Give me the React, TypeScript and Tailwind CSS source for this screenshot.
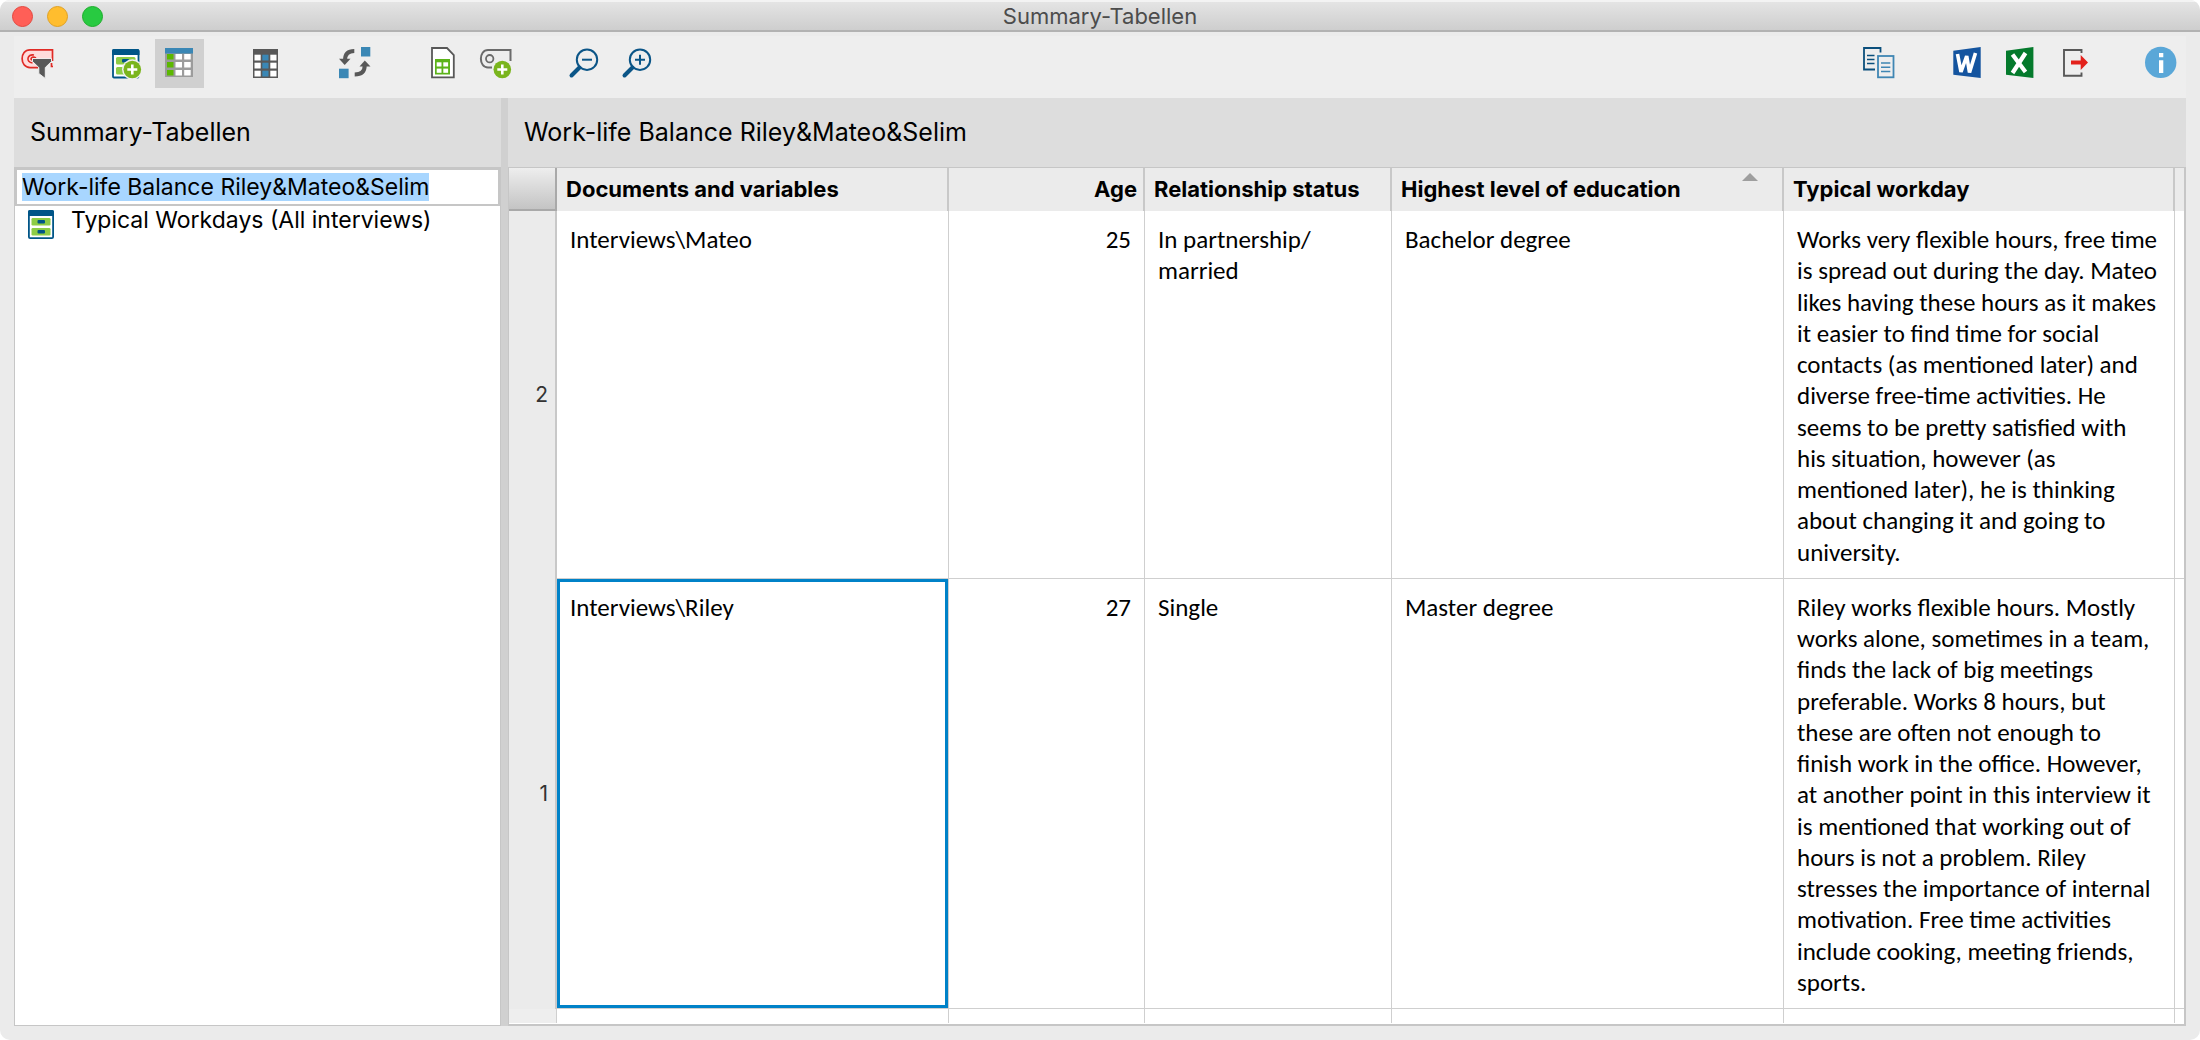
import { useEffect, useRef, type ReactNode } from "react";

const UI = "font-[Inter,sans-serif]";

function ToolButton({ label, active = false, children }: { label: string; active?: boolean; children: ReactNode }) {
  return (
    <button type="button" aria-label={label} aria-pressed={active} className={active ? "size-[49px] bg-[#d0d0d0]" : "size-[49px]"}>
      <svg viewBox="0 0 49 49" className="size-full" fill="none" aria-hidden="true">
        {children}
      </svg>
    </button>
  );
}

function PlusBadge({ cx, cy }: { cx: number; cy: number }) {
  return (
    <g>
      <circle cx={cx} cy={cy} r="10.3" fill="#eeeeee" />
      <circle cx={cx} cy={cy} r="8.8" fill="#7ab51d" />
      <path d={`M${cx - 5} ${cy}h10M${cx} ${cy - 5}v10`} stroke="#fff" strokeWidth="2.6" />
    </g>
  );
}

function Magnifier({ plus }: { plus?: boolean }) {
  return (
    <g stroke="#0b5587">
      <circle cx="27" cy="20.7" r="10.2" strokeWidth="2" />
      <path d="M19.5 28.5L11.5 36.5" strokeWidth="4" strokeLinecap="round" />
      <path d={plus ? "M22 20.7h10M27 15.7v10" : "M22 20.7h10"} strokeWidth="2" />
    </g>
  );
}

function GridCells({ xs, ys, w, h, fills }: { xs: number[]; ys: number[]; w: number; h: number; fills: string[] }) {
  return (
    <>
      {ys.map((y) => xs.map((x, i) => <rect key={`${x}-${y}`} x={x} y={y} width={w} height={h} fill={fills[i]} />))}
    </>
  );
}

function Toolbar() {
  return (
    <div className="mx-[14px] mt-1 flex bg-[#eeeeee] pt-[3px] pb-[10px]">
      <div className="flex flex-1 gap-[39px]">
        <ToolButton label="Filter coded segments">
          <path d="M39 27.5h-1.5V24M38.5 22V10.8H16C5.5 10.8 5.5 28.6 16 28.6H24" fill="#ffdcdc" stroke="#e02b26" strokeWidth="1.7" />
          <path d="M20 16C13 14.5 11.5 23.5 18.5 24M22 19C17.5 16.5 15.5 21 18.5 21" stroke="#e02b26" strokeWidth="1.6" />
          <path d="M18.5 19.5H37.5V22.5L31.3 28.5V39.5L24.8 34.5V28.5L18.5 22.5Z" fill="#585858" stroke="#eeeeee" strokeWidth="1" />
        </ToolButton>
        <div className="flex gap-1">
          <ToolButton label="New summary table">
            <rect x="11" y="11" width="25.5" height="27.5" rx="1" fill="#fff" stroke="#005587" strokeWidth="1.8" />
            <path d="M10 12a2 2 0 0 1 2-2h23.5a2 2 0 0 1 2 2v4H10z" fill="#005587" />
            <rect x="14" y="18" width="19.5" height="7.5" rx="1.5" fill="#8dcc45" />
            <rect x="14" y="28" width="19.5" height="7.5" rx="1.5" fill="#8dcc45" />
            <rect x="20" y="20" width="7" height="3.5" rx="1" fill="#005587" />
            <PlusBadge cx={30.3} cy={30.5} />
          </ToolButton>
          <ToolButton label="Show list of tables" active>
            <rect x="10" y="9" width="28" height="29" fill="#9c9c9c" />
            <rect x="10" y="9" width="28" height="5.5" fill="#3a87b5" />
            <GridCells xs={[12, 20.5, 29.2]} ys={[15, 23, 31]} w={6.5} h={5.5} fills={["#5cb800", "#fff", "#fff"]} />
          </ToolButton>
        </div>
        <ToolButton label="Columns">
          <rect x="10" y="10" width="25" height="29" fill="#585858" />
          <GridCells xs={[11.5, 19.3, 27.3]} ys={[15.7, 23.7, 31.7]} w={6.2} h={5.8} fills={["#fff", "#3a87b5", "#fff"]} />
        </ToolButton>
        <ToolButton label="Swap rows and columns">
          <rect x="30" y="8" width="9.3" height="9.5" fill="#3a87b5" />
          <rect x="8" y="29.7" width="9.6" height="9.5" fill="#3a87b5" />
          <path d="M23.3 12C17 12 14 15.5 14 21" stroke="#585858" strokeWidth="4" />
          <path d="M8 19.8H19.5L13.7 26Z" fill="#585858" />
          <path d="M23.7 35.5C30.5 35.5 33.7 32 33.7 26.5" stroke="#585858" strokeWidth="4" />
          <path d="M28.5 27.5H39.5L33.8 21.5Z" fill="#585858" />
        </ToolButton>
        <div className="flex gap-1">
          <ToolButton label="Insert into document">
            <path d="M13 9H28L34.8 16V38.3H13Z" fill="#fff" stroke="#585858" strokeWidth="1.8" />
            <rect x="16" y="20" width="15" height="15.5" fill="#5cb31a" />
            <GridCells xs={[17.7, 24.3]} ys={[23.3, 29.6]} w={4.8} h={4.2} fills={["#fff", "#fff"]} />
          </ToolButton>
          <ToolButton label="Add coding">
            <path d="M38.5 22V11H16C6.5 11 6.5 28.5 16 28.5H20" stroke="#6b6b6b" strokeWidth="2" />
            <circle cx="17.7" cy="19.7" r="3.7" stroke="#6b6b6b" strokeWidth="1.8" />
            <PlusBadge cx={30.3} cy={30.5} />
          </ToolButton>
        </div>
        <div className="flex gap-1">
          <ToolButton label="Zoom out">
            <Magnifier />
          </ToolButton>
          <ToolButton label="Zoom in">
            <Magnifier plus />
          </ToolButton>
        </div>
      </div>
      <div className="flex gap-[39px]">
        <ToolButton label="Copy">
          <path d="M25.5 13.5V9H9V30.5H20" stroke="#0b4f7c" strokeWidth="1.8" />
          <path d="M12 16.5h7.5M12 20.5h7.5M12 24.5h7.5" stroke="#0b4f7c" strokeWidth="1.6" />
          <rect x="23" y="17" width="15.5" height="21.3" stroke="#3f86b3" strokeWidth="1.8" />
          <path d="M26 24h9.3M26 28.3h9.3M26 32.5h9.3" stroke="#3f86b3" strokeWidth="1.6" />
        </ToolButton>
        <div className="flex gap-1">
          <ToolButton label="Export to Word">
            <path d="M10.3 11.7L37.7 8V39L10.3 35.7Z" fill="#14549f" />
            <path d="M14.5 15L18 33L23.7 17L26.5 33.5L32.5 14" stroke="#fff" strokeWidth="3.6" strokeLinejoin="bevel" />
          </ToolButton>
          <ToolButton label="Export to Excel">
            <path d="M10 11.7L37.4 8V39L10 35.7Z" fill="#047a2c" />
            <path d="M16.5 15.5L29.5 33M29.5 14L16.5 34" stroke="#fff" strokeWidth="4.2" />
          </ToolButton>
          <ToolButton label="Export">
            <path d="M32.5 14V11H15V36.8H32.5V33.5" stroke="#585858" strokeWidth="1.9" />
            <path d="M22 21.5H31.7V16L39 23.4L31.7 31V25.5H22Z" fill="#e3211b" />
          </ToolButton>
        </div>
        <ToolButton label="Info">
          <circle cx="23.7" cy="23.4" r="15.7" fill="#5aa7d8" />
          <path d="M22 14h4.3v4.2H22zM22 21.2h4.3V34H22z" fill="#fff" />
        </ToolButton>
      </div>
    </div>
  );
}

function TableIcon() {
  return (
    <svg viewBox="0 0 26 29" className="h-[29px] w-[26px] shrink-0" aria-hidden="true">
      <rect x="0.9" y="0.9" width="24.2" height="27.2" rx="1.2" fill="#fff" stroke="#005587" strokeWidth="1.8" />
      <path d="M0 2a2 2 0 0 1 2-2h22a2 2 0 0 1 2 2v4H0z" fill="#005587" />
      <rect x="3.5" y="8" width="19" height="7.5" rx="1.2" fill="#8dcc45" />
      <rect x="3.5" y="18" width="19" height="7.5" rx="1.2" fill="#8dcc45" />
      <rect x="9.5" y="10" width="7.5" height="3.5" rx="1" fill="#005587" />
      <rect x="9.5" y="20" width="7.5" height="3.5" rx="1" fill="#005587" />
    </svg>
  );
}

function Sidebar() {
  const nameRef = useRef<HTMLInputElement>(null);
  useEffect(() => {
    nameRef.current?.focus();
    nameRef.current?.select();
  }, []);
  return (
    <aside className="flex w-[487px] shrink-0 flex-col">
      <h2 className="h-[69px] bg-[#dddddd] pl-4 text-[25px] leading-[69px]">Summary-Tabellen</h2>
      <div className="flex-1 border border-[#c6c6c6] bg-white">
        <input
          ref={nameRef}
          aria-label="Table name"
          defaultValue="Work-life Balance Riley&Mateo&Selim"
          className="block h-[38px] w-full border-2 border-[#c6c6c6] bg-white pl-[5px] text-[23px] leading-[30px] outline-none selection:bg-[#a8d6ff] selection:text-black"
        />
        <button type="button" className="flex w-full items-start gap-[17px] pt-1 pl-[13px] text-left text-[23px] leading-[20px]">
          <TableIcon />
          Typical Workdays (All interviews)
        </button>
      </div>
    </aside>
  );
}

const rows = [
  {
    nr: 2,
    doc: "Interviews\\Mateo",
    age: 25,
    status: ["In partnership/", "married"],
    education: "Bachelor degree",
    selected: false,
    workday:
      "Works very flexible hours, free time is spread out during the day. Mateo likes having these hours as it makes it easier to find time for social contacts (as mentioned later) and diverse free-time activities. He seems to be pretty satisfied with his situation, however (as mentioned later), he is thinking about changing it and going to university.",
  },
  {
    nr: 1,
    doc: "Interviews\\Riley",
    age: 27,
    status: ["Single"],
    education: "Master degree",
    selected: true,
    workday:
      "Riley works flexible hours. Mostly works alone, sometimes in a team, finds the lack of big meetings preferable. Works 8 hours, but these are often not enough to finish work in the office. However, at another point in this interview it is mentioned that working out of hours is not a problem. Riley stresses the importance of internal motivation. Free time activities include cooking, meeting friends, sports.",
  },
];

const TH = "border-r-2 border-[#c8c8c8] bg-[#ebebeb] h-[43px] pl-[9px] pr-[6px] text-left font-bold relative";
const TD = "border-r border-b border-[#cfcfcf] pl-[13px] pt-[13px] pb-[10px] align-top";

function SummaryTable() {
  return (
    <table className="w-full table-fixed border-separate border-spacing-0 text-black">
      <colgroup>
        <col className="w-[48px]" />
        <col className="w-[392px]" />
        <col className="w-[196px]" />
        <col className="w-[247px]" />
        <col className="w-[392px]" />
        <col />
        <col className="w-[9px]" />
      </colgroup>
      <thead className="text-[22px]">
        <tr>
          <td className="border-r-2 border-b-2 border-[#a9a9a9] bg-linear-to-b from-[#eeeeee] to-[#c4c4c4]" />
          <th scope="col" className={TH}>Documents and variables</th>
          <th scope="col" className={TH}>
            <span className="block text-right">Age</span>
          </th>
          <th scope="col" className={TH}>Relationship status</th>
          <th scope="col" aria-sort="ascending" className={TH}>
            Highest level of education
            <svg viewBox="0 0 16 8" className="absolute top-[5px] right-[24px] h-2 w-4" aria-hidden="true">
              <path d="M0 8L8 0L16 8Z" fill="#9e9e9e" />
            </svg>
          </th>
          <th scope="col" className={TH}>Typical workday</th>
          <td className="bg-[#ebebeb]" />
        </tr>
      </thead>
      <tbody className="font-[Carlito,Lato,sans-serif] text-[25px] leading-tight">
        {rows.map((r) => (
          <tr key={r.nr}>
            <th scope="row" className="border-r-2 border-[#c8c8c8] bg-[#ebebeb] pr-[7px] text-right align-middle font-[Inter,sans-serif] text-[21px] font-normal text-[#333]">
              {r.nr}
            </th>
            <td className={r.selected ? `${TD} pr-[13px] ring-3 ring-[#0082c8] ring-inset` : `${TD} pr-[13px]`}>{r.doc}</td>
            <td className={`${TD} pr-[13px] text-right`}>{r.age}</td>
            <td className={`${TD} pr-[13px]`}>
              {r.status.map((s) => (
                <div key={s}>{s}</div>
              ))}
            </td>
            <td className={`${TD} pr-[13px]`}>{r.education}</td>
            <td className={`${TD} pr-4`}>{r.workday}</td>
            <td className="border-b border-[#cfcfcf]" />
          </tr>
        ))}
        <tr aria-hidden="true">
          <td className="h-[14px] border-r border-[#cfcfcf] bg-[#eeeeee]" />
          <td className="border-r border-[#cfcfcf]" />
          <td className="border-r border-[#cfcfcf]" />
          <td className="border-r border-[#cfcfcf]" />
          <td className="border-r border-[#cfcfcf]" />
          <td className="border-r border-[#cfcfcf]" />
          <td />
        </tr>
      </tbody>
    </table>
  );
}

export default function App() {
  return (
    <div className="min-h-screen bg-white">
      <div className={`${UI} flex min-h-screen flex-col overflow-hidden rounded-[10px] bg-[#ebebeb] text-black`}>
        <header className="grid h-8 grid-cols-[1fr_auto_1fr] items-center border-t-2 border-b-2 border-t-[#f3f3f3] border-b-[#b2b2b2] bg-linear-to-b from-[#e4e4e4] to-[#cecece]">
          <div className="flex gap-[14px] pl-3">
            <button type="button" aria-label="Close" className="size-[21px] rounded-full border border-[#e2483f] bg-[#ff5f57]" />
            <button type="button" aria-label="Minimize" className="size-[21px] rounded-full border border-[#dfa023] bg-[#ffbd2e]" />
            <button type="button" aria-label="Zoom window" className="size-[21px] rounded-full border border-[#1dad2b] bg-[#28ca41]" />
          </div>
          <h1 className="text-[22px] leading-7 text-[#4c4c4c]">Summary-Tabellen</h1>
        </header>
        <Toolbar />
        <main className="mx-[14px] mb-[14px] flex flex-1">
          <Sidebar />
          <div className="w-[7px] shrink-0 bg-[#d0d0d0]" />
          <section className="flex min-w-0 flex-1 flex-col">
            <h2 className="h-[69px] bg-[#dddddd] pl-4 text-[25px] leading-[69px]">Work-life Balance Riley&amp;Mateo&amp;Selim</h2>
            <div className="flex-1 border border-r-2 border-b-2 border-[#c6c6c6] bg-white">
              <SummaryTable />
            </div>
          </section>
        </main>
      </div>
    </div>
  );
}
